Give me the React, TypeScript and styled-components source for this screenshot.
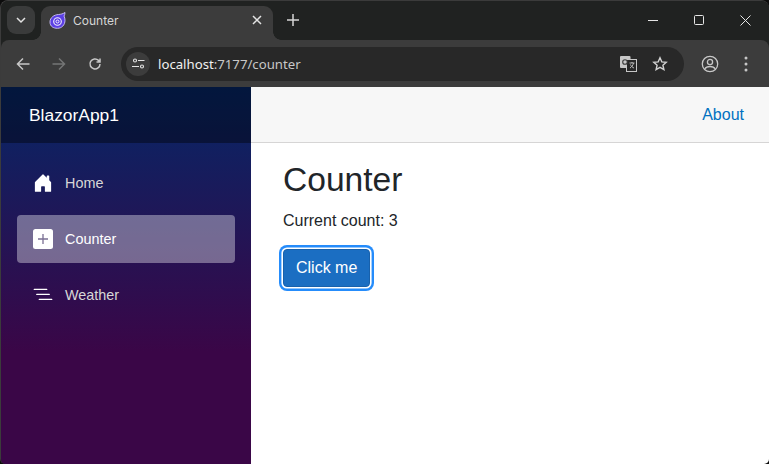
import React from 'react';
import styled, { createGlobalStyle } from 'styled-components';

const GlobalStyle = createGlobalStyle`
	html, body {
		margin: 0;
		padding: 0;
		background: #0c0c0c;
	}
	* {
		box-sizing: border-box;
	}
`;

const Window = styled.div`
	width: 769px;
	height: 464px;
	display: flex;
	flex-direction: column;
	overflow: hidden;
	border-radius: 8px 8px 5px 5px;
	border: 1px solid #3b3b3b;
	border-bottom: none;
	border-right: none;
	background: #202221;
	font-family: 'Liberation Sans', Arial, sans-serif;
`;

const TabStrip = styled.div`
	height: 39px;
	flex: none;
	display: flex;
	align-items: flex-start;
	padding: 5px 0 0 6px;
	background: #202221;
`;

const TabSearch = styled.div`
	width: 28px;
	height: 28px;
	border-radius: 9px;
	background: #3a3b3b;
	display: flex;
	align-items: center;
	justify-content: center;
`;

const Tab = styled.div`
	position: relative;
	width: 232px;
	height: 34px;
	margin-left: 6px;
	border-radius: 9px 9px 0 0;
	background: #3c3c3c;
	display: flex;
	align-items: center;
	padding: 0 11px 6px 8px;
	color: #d6d6d6;
	font-family: 'Inter', 'Liberation Sans', sans-serif;
	font-size: 12px;

	&::before,
	&::after {
		content: '';
		position: absolute;
		bottom: 0;
		width: 8px;
		height: 8px;
	}

	&::before {
		left: -8px;
		background: radial-gradient(circle at 0 0, transparent 7.500px, #3c3c3c 8px);
	}

	&::after {
		right: -8px;
		background: radial-gradient(circle at 100% 0, transparent 7.500px, #3c3c3c 8px);
	}
`;

const TabTitle = styled.span`
	flex: 1;
	margin-left: 7px;
`;

const NewTab = styled.div`
	width: 20px;
	height: 28px;
	margin-left: 10px;
	display: flex;
	align-items: center;
	justify-content: center;
`;

const WindowControls = styled.div`
	margin-left: auto;
	display: flex;
	height: 28px;
	align-items: center;
	padding-right: 1px;
`;

const WindowButton = styled.div`
	width: 46px;
	display: flex;
	justify-content: center;
`;

const Toolbar = styled.div`
	height: 47px;
	flex: none;
	display: flex;
	align-items: center;
	padding: 0 0 0 12px;
	background: #3c3c3c;
	border-radius: 8px 8px 0 0;
`;

const NavButton = styled.div`
	width: 20px;
	height: 20px;
	margin-right: 16px;
	display: flex;
	align-items: center;
	justify-content: center;
`;

const Omnibox = styled.div`
	width: 563px;
	height: 34px;
	border-radius: 17px;
	background: #282828;
	display: flex;
	align-items: center;
	padding: 0 16px 0 5px;
`;

const SiteInfo = styled.div`
	width: 24px;
	height: 24px;
	border-radius: 50%;
	background: #3c3c3c;
	display: flex;
	align-items: center;
	justify-content: center;
`;

const Url = styled.div`
	flex: 1;
	margin-left: 8px;
	font-family: 'Noto Sans', 'Liberation Sans', sans-serif;
	font-size: 13.2px;
	color: #c7c7c7;
`;

const Host = styled.span`
	color: #f1f1f1;
`;

const OmniIcons = styled.div`
	display: flex;
	gap: 15px;
	align-items: center;
`;

const ToolbarRight = styled.div`
	margin-left: 17px;
	display: flex;
	gap: 25px;
	align-items: center;
`;

const Page = styled.div`
	flex: 1;
	display: flex;
	min-height: 0;
`;

const Sidebar = styled.nav`
	width: 250px;
	flex: none;
	background-image: linear-gradient(180deg, rgb(5, 39, 103) 0%, #3a0647 70%);
	display: flex;
	flex-direction: column;
`;

const Brand = styled.div`
	height: 56px;
	flex: none;
	display: flex;
	align-items: center;
	padding-left: 28px;
	background: rgba(0, 0, 0, 0.4);
	color: #fff;
	font-size: 17.4px;
`;

const NavList = styled.div`
	padding: 16px 16px 0;
	display: flex;
	flex-direction: column;
	gap: 8px;
`;

const NavItem = styled.div<{ $active?: boolean }>`
	height: 48px;
	display: flex;
	align-items: center;
	padding-left: 16px;
	border-radius: 4px;
	font-size: 14.4px;
	color: ${(p) => (p.$active ? '#fff' : '#d7d7d7')};
	background: ${(p) => (p.$active ? 'rgba(255, 255, 255, 0.37)' : 'transparent')};
`;

const NavIcon = styled.span`
	width: 20px;
	height: 20px;
	margin-right: 12px;
	display: flex;
	align-items: center;
	justify-content: center;
`;

const Main = styled.main`
	flex: 1;
	background: #fff;
	display: flex;
	flex-direction: column;
`;

const TopRow = styled.div`
	height: 56px;
	flex: none;
	background: #f7f7f7;
	border-bottom: 1px solid #d6d5d5;
	display: flex;
	align-items: center;
	justify-content: flex-end;
	padding-right: 25px;
`;

const AboutLink = styled.a`
	color: #0071c1;
	font-size: 16px;
	text-decoration: none;
`;

const Article = styled.article`
	padding: 16px 32px 0;
	color: #212529;
`;

const Title = styled.h1`
	margin: 0 0 8px;
	font-size: 33.6px;
	font-weight: 400;
	line-height: 42px;
`;

const CountText = styled.p`
	margin: 0 0 16px;
	font-size: 16px;
	line-height: 24px;
`;

const PrimaryButton = styled.button`
	height: 38px;
	padding: 0 12px;
	font-family: inherit;
	font-size: 16px;
	color: #fff;
	background: #1b6ec2;
	border: 1px solid #1861ac;
	border-radius: 4px;
	box-shadow: 0 0 0 1.6px #fff, 0 0 0 4px #258cfb;
`;

const Stroke = styled.svg`
	display: block;
	fill: none;
	stroke: ${(p) => p.color || '#c7c7c7'};
	stroke-width: 1.5;
`;

export default function App() {
	return (
		<Window>
			<GlobalStyle />
			<TabStrip>
				<TabSearch>
					<Stroke width="10" height="10" viewBox="0 0 10 10" color="#e3e3e3">
						<path d="M1 3l4 4 4-4" />
					</Stroke>
				</TabSearch>
				<Tab>
					<svg width="17" height="17" viewBox="0 0 17 17">
						<path d="M1 10C1 5.500 5 2.800 9.500 2.500c2.500-.2 4.500-.7 6.500-2 0 1.500-.4 2.600-1 3.500.7 1.300 1 2.800 1 4.300 0 4.700-3.300 8-7.500 8S1 14.500 1 10z" fill="#5b3fe4" stroke="#cfc4fa" strokeWidth="0.900" />
						<circle cx="8.500" cy="9.500" r="3.800" fill="none" stroke="#f3f0ff" strokeWidth="1.100" />
						<circle cx="8.500" cy="9.500" r="1.500" fill="none" stroke="#f3f0ff" strokeWidth="1" />
					</svg>
					<TabTitle>Counter</TabTitle>
					<Stroke width="10" height="10" viewBox="0 0 10 10" color="#e3e3e3">
						<path d="M1 1l8 8M9 1l-8 8" />
					</Stroke>
				</Tab>
				<NewTab>
					<Stroke width="12" height="12" viewBox="0 0 12 12" color="#d6d6d6">
						<path d="M6 0v12M0 6h12" />
					</Stroke>
				</NewTab>
				<WindowControls>
					<WindowButton>
						<Stroke width="10" height="10" viewBox="0 0 10 10" color="#e6e6e6" style={{ strokeWidth: 1 }}>
							<path d="M0 5.500h10" />
						</Stroke>
					</WindowButton>
					<WindowButton>
						<Stroke width="10" height="10" viewBox="0 0 10 10" color="#e6e6e6" style={{ strokeWidth: 1 }}>
							<rect x="0.500" y="0.500" width="9" height="9" rx="1" />
						</Stroke>
					</WindowButton>
					<WindowButton>
						<Stroke width="11" height="11" viewBox="0 0 11 11" color="#e6e6e6" style={{ strokeWidth: 1 }}>
							<path d="M0.500 0.500l10 10M10.500 0.500l-10 10" />
						</Stroke>
					</WindowButton>
				</WindowControls>
			</TabStrip>
			<Toolbar>
				<NavButton>
					<Stroke width="14" height="14" viewBox="0 0 14 14" color="#c7c7c7">
						<path d="M13.500 7H1.500M7 1.500L1.500 7 7 12.500" />
					</Stroke>
				</NavButton>
				<NavButton>
					<Stroke width="14" height="14" viewBox="0 0 14 14" color="#747575">
						<path d="M.5 7h12M7 1.500L12.500 7 7 12.500" />
					</Stroke>
				</NavButton>
				<NavButton>
					<Stroke width="14" height="14" viewBox="0 0 14 14" color="#c7c7c7">
						<path d="M12 7a5 5 0 1 1-1.500-3.600L12 5M12 1.500V5H8.500" />
					</Stroke>
				</NavButton>
				<Omnibox>
					<SiteInfo>
						<Stroke width="13" height="13" viewBox="0 0 13 13" color="#e3e3e3" style={{ strokeWidth: 1.1 }}>
							<circle cx="3" cy="3.500" r="1.500" />
							<path d="M6 3.500h6.500M0 9.500h7" />
							<circle cx="10" cy="9.500" r="1.500" />
						</Stroke>
					</SiteInfo>
					<Url>
						<Host>localhost</Host>:7177/counter
					</Url>
					<OmniIcons>
						<svg width="17" height="16" viewBox="0 0 17 16">
							<rect x="0" y="0" width="10.500" height="12" rx="1" fill="#c7c7c7" />
							<rect x="6.500" y="3.500" width="10" height="12" fill="#282828" stroke="#c7c7c7" />
							<circle cx="5" cy="6" r="2.300" fill="none" stroke="#3c3c3c" strokeWidth="1.100" />
							<path d="M9.500 7h5M12 6v1M13.500 7c-.5 2.500-2 4-3.500 5M10.500 8.500c.5 1.500 2 3 3.500 3.500" fill="none" stroke="#c7c7c7" strokeWidth="0.900" />
						</svg>
						<Stroke width="16" height="16" viewBox="0 0 16 16" color="#d0d0d0" style={{ strokeWidth: 1.4 }}>
							<path d="M8 1.800l1.800 4.100 4.400.4-3.300 2.900 1 4.400L8 11.300l-3.900 2.300 1-4.400L1.800 6.300l4.400-.4z" />
						</Stroke>
					</OmniIcons>
				</Omnibox>
				<ToolbarRight>
					<Stroke width="18" height="18" viewBox="0 0 18 18" color="#c7c7c7" style={{ strokeWidth: 1.3 }}>
						<circle cx="9" cy="9" r="7.700" />
						<circle cx="9" cy="7" r="2.600" />
						<path d="M3.800 14c1-1.700 3-2.500 5.200-2.500s4.200.8 5.200 2.500" />
					</Stroke>
					<svg width="4" height="16" viewBox="0 0 4 16" fill="#c7c7c7">
						<circle cx="2" cy="2" r="1.500" />
						<circle cx="2" cy="8" r="1.500" />
						<circle cx="2" cy="14" r="1.500" />
					</svg>
				</ToolbarRight>
			</Toolbar>
			<Page>
				<Sidebar>
					<Brand>BlazorApp1</Brand>
					<NavList>
						<NavItem>
							<NavIcon>
								<svg width="20" height="20" viewBox="0 0 16 16" fill="#fff">
									<path d="M6.500 14.500v-3.505c0-.245.25-.495.5-.495h2c.25 0 .5.25.5.5v3.500a.5.5 0 0 0 .5.5h4a.5.5 0 0 0 .5-.5v-7a.5.5 0 0 0-.146-.354L13 5.793V2.500a.5.5 0 0 0-.5-.5h-1a.5.5 0 0 0-.5.5v1.293L8.354 1.146a.5.5 0 0 0-.708 0l-6 6A.5.5 0 0 0 1.500 7.500v7a.5.5 0 0 0 .5.5h4a.5.5 0 0 0 .5-.5z" />
								</svg>
							</NavIcon>
							Home
						</NavItem>
						<NavItem $active>
							<NavIcon>
								<svg width="20" height="20" viewBox="0 0 20 20">
									<rect width="20" height="20" rx="2.500" fill="#fff" />
									<path d="M10 5v10M5 10h10" stroke="#7a6f94" strokeWidth="1.300" />
								</svg>
							</NavIcon>
							Counter
						</NavItem>
						<NavItem>
							<NavIcon>
								<svg width="20" height="20" viewBox="0 0 16 16" fill="#fff">
									<path d="M4.500 11.500A.5.5 0 0 1 5 11h10a.5.5 0 0 1 0 1H5a.5.5 0 0 1-.5-.5zm-2-4A.5.5 0 0 1 3 7h10a.5.5 0 0 1 0 1H3a.5.5 0 0 1-.5-.5zm-2-4A.5.5 0 0 1 1 3h10a.5.5 0 0 1 0 1H1a.5.5 0 0 1-.5-.5z" />
								</svg>
							</NavIcon>
							Weather
						</NavItem>
					</NavList>
				</Sidebar>
				<Main>
					<TopRow>
						<AboutLink href="#">About</AboutLink>
					</TopRow>
					<Article>
						<Title>Counter</Title>
						<CountText>Current count: 3</CountText>
						<PrimaryButton>Click me</PrimaryButton>
					</Article>
				</Main>
			</Page>
		</Window>
	);
}
